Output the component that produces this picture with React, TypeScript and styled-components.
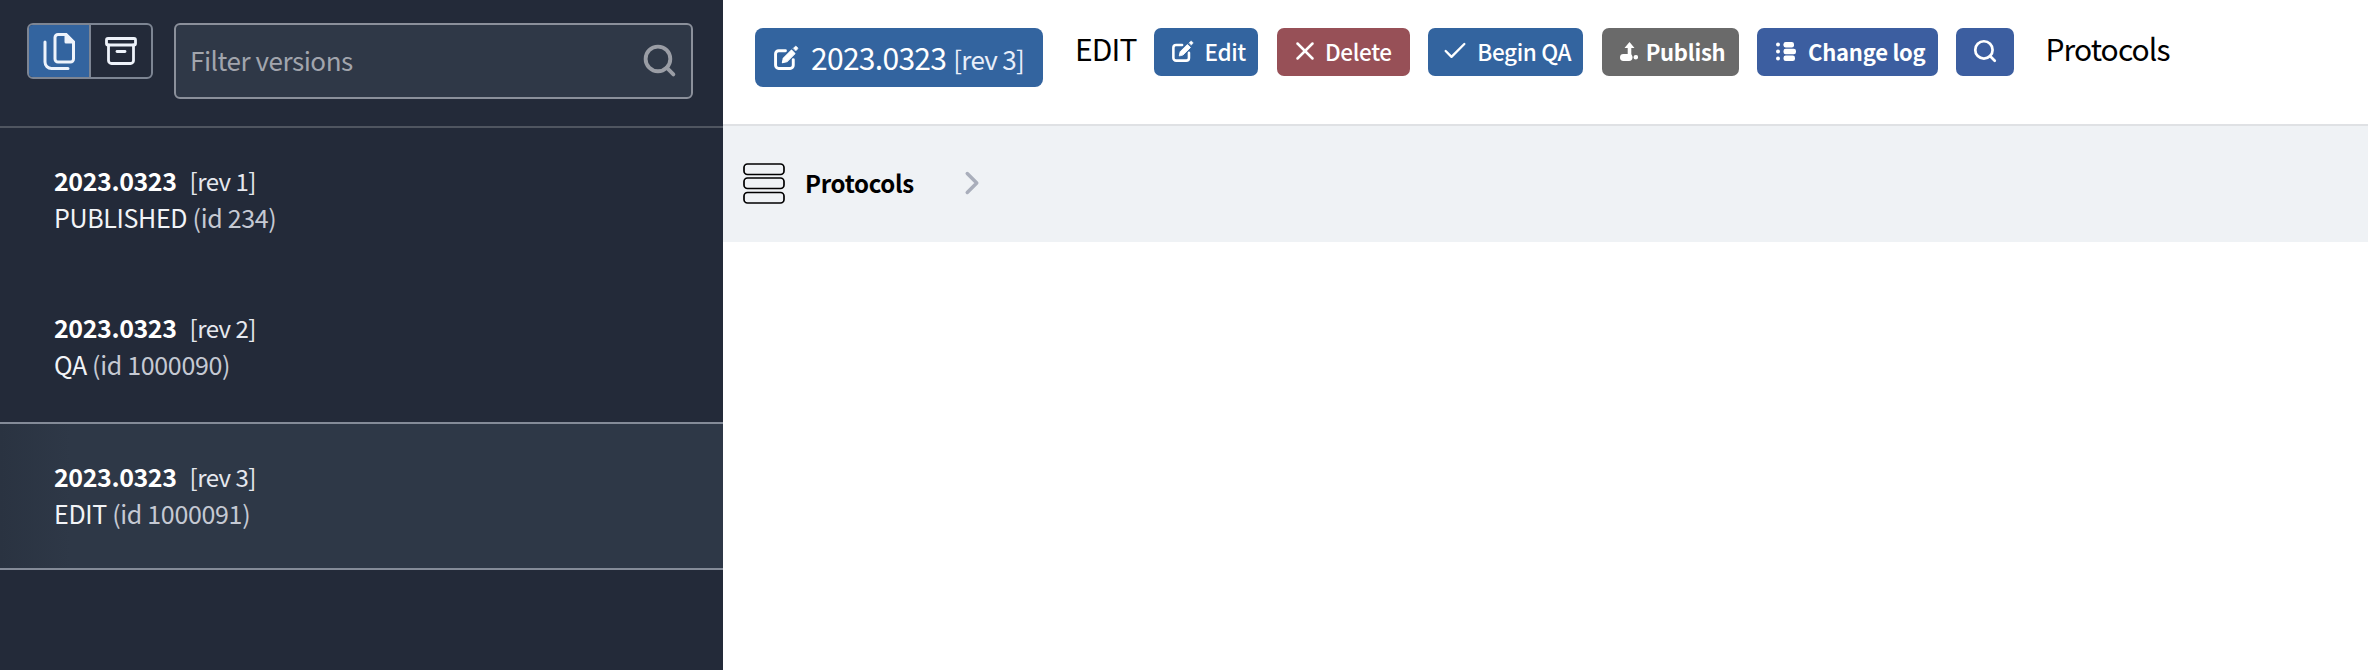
import React from "react";
import styled, { createGlobalStyle } from "styled-components";
import { Search, X, Check, ChevronRight } from "lucide-react";

const Global = createGlobalStyle`
  html, body { margin: 0; padding: 0; background: #fff; }
  body { font-family: "Noto Sans CJK SC", "Source Sans Pro", "Noto Sans", sans-serif; }
  * { box-sizing: border-box; }
`;

const Page = styled.div`
  display: flex;
  width: 2368px;
  height: 670px;
  overflow: hidden;
`;

const Sidebar = styled.aside`
  width: 723px;
  flex: none;
  background: #232a39;
  display: flex;
  flex-direction: column;
`;

const SideHeader = styled.div`
  height: 128px;
  flex: none;
  padding: 23px 30px 0 27px;
  display: flex;
  align-items: flex-start;
  gap: 21px;
  border-bottom: 2px solid #4f5560;
`;

const Toggle = styled.div`
  display: flex;
  width: 126px;
  height: 56px;
  border: 2px solid #7d8593;
  border-radius: 6px;
  overflow: hidden;
  flex: none;
`;

const ToggleCell = styled.div<{ $active?: boolean }>`
  flex: 1;
  display: flex;
  align-items: center;
  justify-content: center;
  background: ${(p) => (p.$active ? "#33649f" : "transparent")};
  color: #eef3fb;
  & + & { border-left: 2px solid #7d8593; }
`;

const Filter = styled.div`
  flex: 1;
  height: 76px;
  display: flex;
  align-items: center;
  justify-content: space-between;
  padding: 0 13px 2px 14px;
  background: #2f3847;
  border: 2px solid #8b909b;
  border-radius: 6px;
  color: #a2a5ad;
  font-size: 26px;
  letter-spacing: -0.45px;
  line-height: 36px;
`;

const Item = styled.div<{ $active?: boolean }>`
  height: ${(p) => (p.$active ? "148px" : "147px")};
  padding: 34px 54px 0;
  background: ${(p) => (p.$active ? "linear-gradient(90deg, #2a3341, #2e3847 70px)" : "transparent")};
  border-top: ${(p) => (p.$active ? "2px solid #848b98" : "0")};
  border-bottom: ${(p) => (p.$active ? "2px solid #848b98" : "0")};
  color: #fff;
  font-size: 25px;
  letter-spacing: -0.33px;
  line-height: 37px;
`;

const ItemTitle = styled.div`
  display: flex;
  gap: 13px;
  & > b { font-weight: 700; letter-spacing: -0.4px; }
  & > span { color: #e6e8ee; font-size: 24px; letter-spacing: -0.5px; }
`;

const ItemSub = styled.div`
  color: #f2f4f7;
  & > span { color: #c5c9d3; }
`;

const Main = styled.main`
  flex: 1;
  min-width: 0;
  display: flex;
  flex-direction: column;
  background: #fff;
`;

const TopBar = styled.div`
  height: 126px;
  flex: none;
  padding: 28px 0 0 32px;
  display: flex;
  align-items: flex-start;
  border-bottom: 2px solid #dfe1e4;
  color: #000;
`;

const VersionButton = styled.div`
  width: 288px;
  height: 59px;
  background: #33649f;
  border-radius: 8px;
  color: #fff;
  display: flex;
  align-items: center;
  padding-left: 19px;
  gap: 12px;
  font-size: 30px;
  letter-spacing: -0.7px;
  line-height: 40px;
  margin-right: 32px;
  & small { font-size: 26px; letter-spacing: -0.7px; margin-left: 7px; color: #e8eefa; }
`;

const Label = styled.div<{ $ml?: number }>`
  font-size: 30px;
  letter-spacing: -0.9px;
  line-height: 40px;
  margin-left: ${(p) => p.$ml ?? 0}px;
  white-space: nowrap;
`;

const ActionRow = styled.div`
  display: flex;
  gap: 18.4px;
  margin-left: 18px;
`;

const Action = styled.div<{ $bg: string; $w: number; $bold?: boolean; $pl: number; $gap: number }>`
  width: ${(p) => p.$w}px;
  height: 48px;
  background: ${(p) => p.$bg};
  border-radius: 7px;
  color: #fff;
  display: flex;
  align-items: center;
  padding: 0 0 2px ${(p) => p.$pl}px;
  gap: ${(p) => p.$gap}px;
  font-size: ${(p) => (p.$bold ? 22 : 22.5)}px;
  letter-spacing: ${(p) => (p.$bold ? "-0.25px" : "-0.35px")};
  line-height: 32px;
  font-weight: ${(p) => (p.$bold ? 700 : 500)};
  white-space: nowrap;
`;

const Crumbs = styled.div`
  height: 116px;
  flex: none;
  background: #eff2f5;
  display: flex;
  align-items: center;
  padding: 0 0 2px 20px;
  color: #000;
`;

const CrumbText = styled.div`
  font-size: 24px;
  letter-spacing: -0.3px;
  line-height: 36px;
  font-weight: 700;
  margin-left: 20px;
`;

const Chevron = styled.div`
  color: #a9aebb;
  display: flex;
  margin-left: 39px;
`;

const EditIcon = ({ size = 24 }: { size?: number }) => (
  <svg width={size} height={size} viewBox="0 0 24 24" fill="none" stroke="currentColor" strokeWidth="2.8" strokeLinecap="round" strokeLinejoin="round">
    <path d="M18.5 14v5.5a3 3 0 0 1-3 3h-11a3 3 0 0 1-3-3v-11a3 3 0 0 1 3-3H11" />
    <path d="M8 17l.9-4.2 7.9-7.9 3.3 3.3-7.9 7.9z" fill="currentColor" strokeWidth="1" />
    <path d="M18.6 3.1l1.6-1.6a1 1 0 0 1 1.4 0l1 1a1 1 0 0 1 0 1.4l-1.6 1.6z" fill="currentColor" strokeWidth="0.6" />
  </svg>
);

const CopyIcon = () => (
  <svg width="32" height="37" viewBox="0 0 32 37" fill="none" stroke="currentColor" strokeWidth="3" strokeLinecap="round" strokeLinejoin="round">
    <path d="M12 4.5a3 3 0 0 1 3-3h8l7.5 7.5v17a3 3 0 0 1-3 3H15a3 3 0 0 1-3-3z" />
    <path d="M23 1.5V9h7.5z" fill="currentColor" />
    <path d="M2 9v20a6.5 6.5 0 0 0 6.5 6.5H25" />
  </svg>
);

const ArchiveIcon = () => (
  <svg width="32" height="28" viewBox="0 0 32 28" fill="none" stroke="currentColor" strokeWidth="2.8" strokeLinecap="round" strokeLinejoin="round">
    <rect x="1.5" y="1.5" width="29" height="6.5" rx="1.5" />
    <path d="M3.5 8v15.5a3 3 0 0 0 3 3h19a3 3 0 0 0 3-3V8" />
    <path d="M12 14.5h8" />
  </svg>
);

const PublishIcon = () => (
  <svg width="18" height="19" viewBox="0 0 18 19" fill="currentColor">
    <path d="M9.5 0l5 6h-3.2v8H7.7V6H4.5z" />
    <rect x="0" y="12" width="12.5" height="7" rx="3.4" />
    <circle cx="15.8" cy="15.2" r="2.3" />
  </svg>
);

const LogIcon = () => (
  <svg width="20" height="19" viewBox="0 0 20 19" fill="currentColor">
    <circle cx="2" cy="2.5" r="2" />
    <circle cx="2" cy="9.5" r="2" />
    <circle cx="2" cy="16.5" r="2" />
    <rect x="7.5" y="0" width="10.5" height="5.4" rx="2.2" />
    <rect x="7.5" y="6.8" width="12.5" height="5.4" rx="2.2" />
    <rect x="7.5" y="13.6" width="11.5" height="5.4" rx="2.2" />
  </svg>
);

const StackIcon = () => (
  <svg width="42" height="41" viewBox="0 0 42 41" fill="none" stroke="#000" strokeWidth="1.7">
    <rect x="1" y="1" width="40" height="10.5" rx="3.5" />
    <rect x="1" y="15" width="40" height="10.5" rx="3.5" />
    <rect x="1" y="29.5" width="40" height="10.5" rx="3.5" />
  </svg>
);

const versions = [
  { rev: 1, state: "PUBLISHED", id: 234 },
  { rev: 2, state: "QA", id: 1000090 },
  { rev: 3, state: "EDIT", id: 1000091, active: true },
];

export default function App() {
  return (
    <Page>
      <Global />
      <Sidebar>
        <SideHeader>
          <Toggle>
            <ToggleCell $active><CopyIcon /></ToggleCell>
            <ToggleCell><ArchiveIcon /></ToggleCell>
          </Toggle>
          <Filter>
            <span>Filter versions</span>
            <Search size={37} strokeWidth={2.5} color="#9a9da5" />
          </Filter>
        </SideHeader>
        {versions.map((v) => (
          <Item key={v.rev} $active={v.active}>
            <ItemTitle><b>2023.0323</b><span>[rev {v.rev}]</span></ItemTitle>
            <ItemSub>{v.state} <span>(id {v.id})</span></ItemSub>
          </Item>
        ))}
      </Sidebar>
      <Main>
        <TopBar>
          <VersionButton>
            <EditIcon size={25} />
            <span>2023.0323<small>[rev 3]</small></span>
          </VersionButton>
          <Label>EDIT</Label>
          <ActionRow>
            <Action $bg="#33649f" $w={104} $pl={18} $gap={10}><EditIcon size={22} />Edit</Action>
            <Action $bg="#975057" $w={133} $pl={13} $gap={5}><X size={30} strokeWidth={2} />Delete</Action>
            <Action $bg="#33649f" $w={155} $pl={13} $gap={8}><Check size={28} strokeWidth={2} />Begin QA</Action>
            <Action $bg="#6a6a6a" $w={137} $pl={18} $gap={8} $bold><PublishIcon />Publish</Action>
            <Action $bg="#3c5ea0" $w={181} $pl={19} $gap={12} $bold><LogIcon />Change log</Action>
            <Action $bg="#3c5ea0" $w={58} $pl={16} $gap={0}><Search size={26} strokeWidth={2.5} /></Action>
          </ActionRow>
          <Label $ml={31}>Protocols</Label>
        </TopBar>
        <Crumbs>
          <StackIcon />
          <CrumbText>Protocols</CrumbText>
          <Chevron><ChevronRight size={38} strokeWidth={2.2} /></Chevron>
        </Crumbs>
      </Main>
    </Page>
  );
}
